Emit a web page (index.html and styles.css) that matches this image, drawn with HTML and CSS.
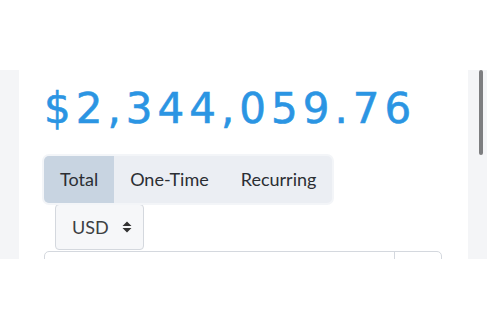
FILE: index.html
```html
<!DOCTYPE html>
<html lang="en">
<head>
    <meta charset="UTF-8">
    <meta name="viewport" content="width=device-width, initial-scale=1.0">
    <title>Revenue</title>
    <link rel="stylesheet" href="styles.css">
</head>
<body>
<div class="top"></div>
<div class="panel">
    <div class="side"></div>
    <main class="main">
        <h1 class="amount">$2,344,059.76</h1>
        <div class="tabs">
            <button class="tab active">Total</button>
            <button class="tab">One-Time</button>
            <button class="tab">Recurring</button>
        </div>
        <div class="currency">
            USD
            <svg class="updown" width="10" height="12" viewBox="0 0 10 12"><path d="M5 0.5 L9.5 5 H0.5 Z M5 11.5 L9.5 7 H0.5 Z" fill="#333"/></svg>
        </div>
        <div class="table">
            <div class="cell wide"></div>
            <div class="cell"></div>
        </div>
    </main>
    <div class="side right"><span class="thumb"></span></div>
</div>
</body>
</html>
```

FILE: styles.css
```css
body {margin: 0; background: #fff; font-family: Lato, "Open Sans", sans-serif;}
.top {height: 70px;}
.panel {display: flex; height: 189px; overflow: hidden;}
.side {width: 19px; flex: none; background: #f4f5f7;}
.side.right {position: relative;}
.thumb {position: absolute; left: 11px; top: 0; width: 4px; height: 85px; border-radius: 2px; background: #7d7e80;}
.main {flex: 1; padding: 14px 0 0 25px; background: #fff;}

.amount {margin: 0 0 22px; font-family: "DejaVu Sans", sans-serif; font-weight: normal; font-size: 42px; line-height: 50px; letter-spacing: 5px; color: #2b95e3; -webkit-text-stroke: 0.6px #2b95e3;}

.tabs {display: inline-flex; background: #ebeef3; border-radius: 5px; box-shadow: 0 0 0 2px #f3f5f8; overflow: hidden;}
.tab {border: 0; background: none; padding: 11px 16px; font-family: inherit; font-size: 18px; line-height: 25px; color: #2b2e33;}
.tab.active {background: #c8d4e1;}

.currency {display: flex; align-items: center; gap: 13px; width: 71px; height: 44px; margin: 1px 0 0 11px; padding: 0 0 0 16px; border: 1px solid #d4d8de; border-radius: 4px; background: #f6f7f9; font-size: 18px; color: #3c3f43;}
.updown {display: block;}

.table {display: flex; width: 396px; height: 40px; margin-top: 1px; border: 1px solid #d4d8de; border-radius: 5px 5px 0 0;}
.cell.wide {width: 349px; border-right: 1px solid #d4d8de;}
```
